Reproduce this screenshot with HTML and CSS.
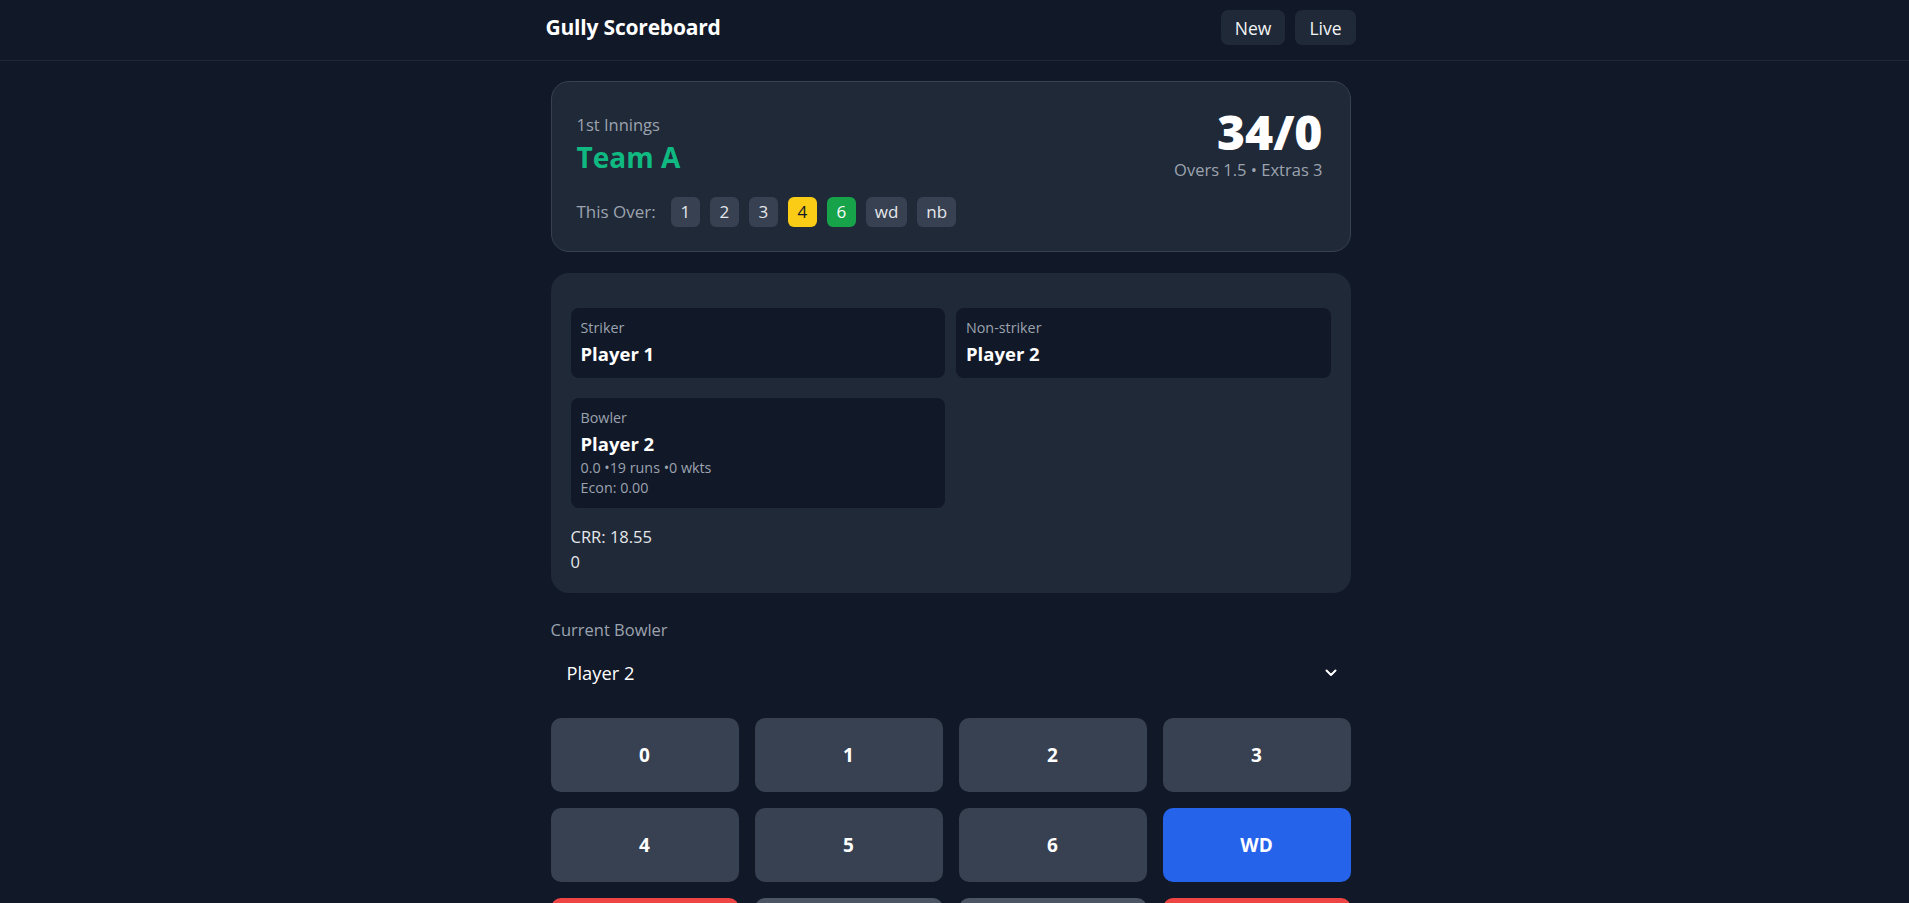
FILE: index.html
```html
<!DOCTYPE html>
<html lang="en">
<head>
<meta charset="utf-8">
<title>Gully Scoreboard</title>
<link rel="stylesheet" href="styles.css">
</head>
<body>
<header class="topbar">
  <div class="topbar-inner">
    <h1 class="brand">Gully Scoreboard</h1>
    <nav class="nav">
      <button class="nav-btn">New</button>
      <button class="nav-btn">Live</button>
    </nav>
  </div>
</header>
<main class="wrap">
  <section class="card score-card">
    <div class="score-top">
      <div class="team-col">
        <div class="innings">1st Innings</div>
        <div class="team">Team A</div>
      </div>
      <div class="runs-col">
        <div class="runs">34/0</div>
        <div class="overs">Overs 1.5 • Extras 3</div>
      </div>
    </div>
    <div class="this-over">
      <span class="over-label">This Over:</span>
      <span class="ball">1</span>
      <span class="ball">2</span>
      <span class="ball">3</span>
      <span class="ball ball-four">4</span>
      <span class="ball ball-six">6</span>
      <span class="ball">wd</span>
      <span class="ball">nb</span>
    </div>
  </section>

  <section class="card players-card">
    <div class="players">
      <div class="pbox">
        <div class="plabel">Striker</div>
        <div class="pname">Player 1</div>
      </div>
      <div class="pbox">
        <div class="plabel">Non-striker</div>
        <div class="pname">Player 2</div>
      </div>
      <div class="pbox">
        <div class="plabel">Bowler</div>
        <div class="pname">Player 2</div>
        <div class="pstat">0.0 •19 runs •0 wkts</div>
        <div class="pstat">Econ: 0.00</div>
      </div>
    </div>
    <div class="rate">CRR: 18.55</div>
    <div class="rate">0</div>
  </section>

  <div class="field-label">Current Bowler</div>
  <div class="select">
    <span>Player 2</span>
    <svg class="chev" width="12" height="8" viewBox="0 0 12 8"><path d="M1.5 1.5 L6 6 L10.5 1.5" fill="none" stroke="#ffffff" stroke-width="2" stroke-linecap="round" stroke-linejoin="round"/></svg>
  </div>

  <div class="pad">
    <button class="key">0</button>
    <button class="key">1</button>
    <button class="key">2</button>
    <button class="key">3</button>
    <button class="key">4</button>
    <button class="key">5</button>
    <button class="key">6</button>
    <button class="key key-blue">WD</button>
    <button class="key key-red">W</button>
    <button class="key key-mid">NB</button>
    <button class="key key-mid">BYE</button>
    <button class="key key-red">UNDO</button>
  </div>
</main>
</body>
</html>
```
FILE: styles.css
```css
* { box-sizing: border-box; }
html, body { margin: 0; padding: 0; }
body {
  background: #111827;
  color: #ffffff;
  font-family: "Open Sans", "Noto Sans", sans-serif;
  font-size: 16.5px;
  line-height: 24px;
  padding-right: 8px;
}
button { font-family: inherit; border: 0; cursor: pointer; }

.topbar {
  height: 61px;
  border-bottom: 1px solid #1f2937;
  margin-right: -8px;
  padding-right: 8px;
}
.topbar-inner {
  width: 810px;
  margin: 0 auto;
  padding-top: 10px;
  display: flex;
  justify-content: space-between;
  align-items: flex-start;
}
.brand {
  margin: 0;
  font-size: 21px;
  font-weight: 700;
  line-height: 35px;
  letter-spacing: -0.2px;
}
.nav { display: flex; gap: 10px; }
.nav-btn {
  height: 35px;
  padding: 0 14px;
  border-radius: 7px;
  background: #1f2937;
  color: #f3f4f6;
  font-size: 17.5px;
  font-weight: 500;
}

.wrap {
  width: 800px;
  margin: 0 auto;
  padding-top: 20px;
}
.card {
  background: #1f2937;
  border-radius: 18px;
}
.score-card {
  border: 1px solid #374151;
  padding: 24px 27px 24px 25px;
}
.score-top {
  display: flex;
  justify-content: space-between;
  align-items: center;
}
.innings { color: #9ca3af; line-height: 24px; }
.team {
  color: #10b981;
  font-size: 28px;
  font-weight: 700;
  line-height: 36px;
  margin-top: 2px;
}
.runs-col { text-align: right; }
.runs {
  font-size: 48px;
  font-weight: 800;
  line-height: 52px;
}
.overs { color: #9ca3af; line-height: 24px; }
.this-over {
  margin-top: 15px;
  display: flex;
  align-items: center;
  gap: 10px;
  height: 30px;
  font-size: 17px;
}
.over-label { color: #9ca3af; margin-right: 5px; }
.ball {
  height: 30px;
  min-width: 29px;
  padding: 0 9px;
  border-radius: 6px;
  background: #374151;
  color: #e5e7eb;
  display: flex;
  align-items: center;
  justify-content: center;
  line-height: 30px;
}
.ball-four { background: #facc15; color: #111827; }
.ball-six { background: #16a34a; color: #ffffff; }

.players-card {
  margin-top: 21px;
  padding: 35px 20px 19px 20px;
}
.players {
  display: grid;
  grid-template-columns: 1fr 1fr;
  column-gap: 11px;
  row-gap: 20px;
  align-items: start;
  margin-bottom: 16px;
}
.pbox {
  background: #111827;
  border-radius: 8px;
  padding: 10px;
}
.plabel { color: #9ca3af; font-size: 14.3px; line-height: 20px; }
.pname { font-size: 18.5px; font-weight: 700; line-height: 28px; margin-top: 2px; }
.pstat { color: #9ca3af; font-size: 14.3px; line-height: 20px; }
.rate { color: #e5e7eb; line-height: 25px; }

.field-label {
  margin-top: 25px;
  color: #9ca3af;
  line-height: 24px;
}
.select {
  margin-top: 7px;
  height: 48px;
  padding: 0 12px 0 16px;
  display: flex;
  align-items: center;
  justify-content: space-between;
  font-size: 18.3px;
  background: #111827;
  border-radius: 8px;
}
.chev { margin-right: 2px; }

.pad {
  margin-top: 21px;
  display: grid;
  grid-template-columns: repeat(4, 1fr);
  gap: 16px;
}
.key {
  height: 74px;
  border-radius: 10px;
  background: #374151;
  color: #ffffff;
  font-size: 19px;
  font-weight: 700;
}
.key-blue { background: #2563eb; }
.key-red { background: #ef4444; }
.key-mid { background: #4b5563; }
```
